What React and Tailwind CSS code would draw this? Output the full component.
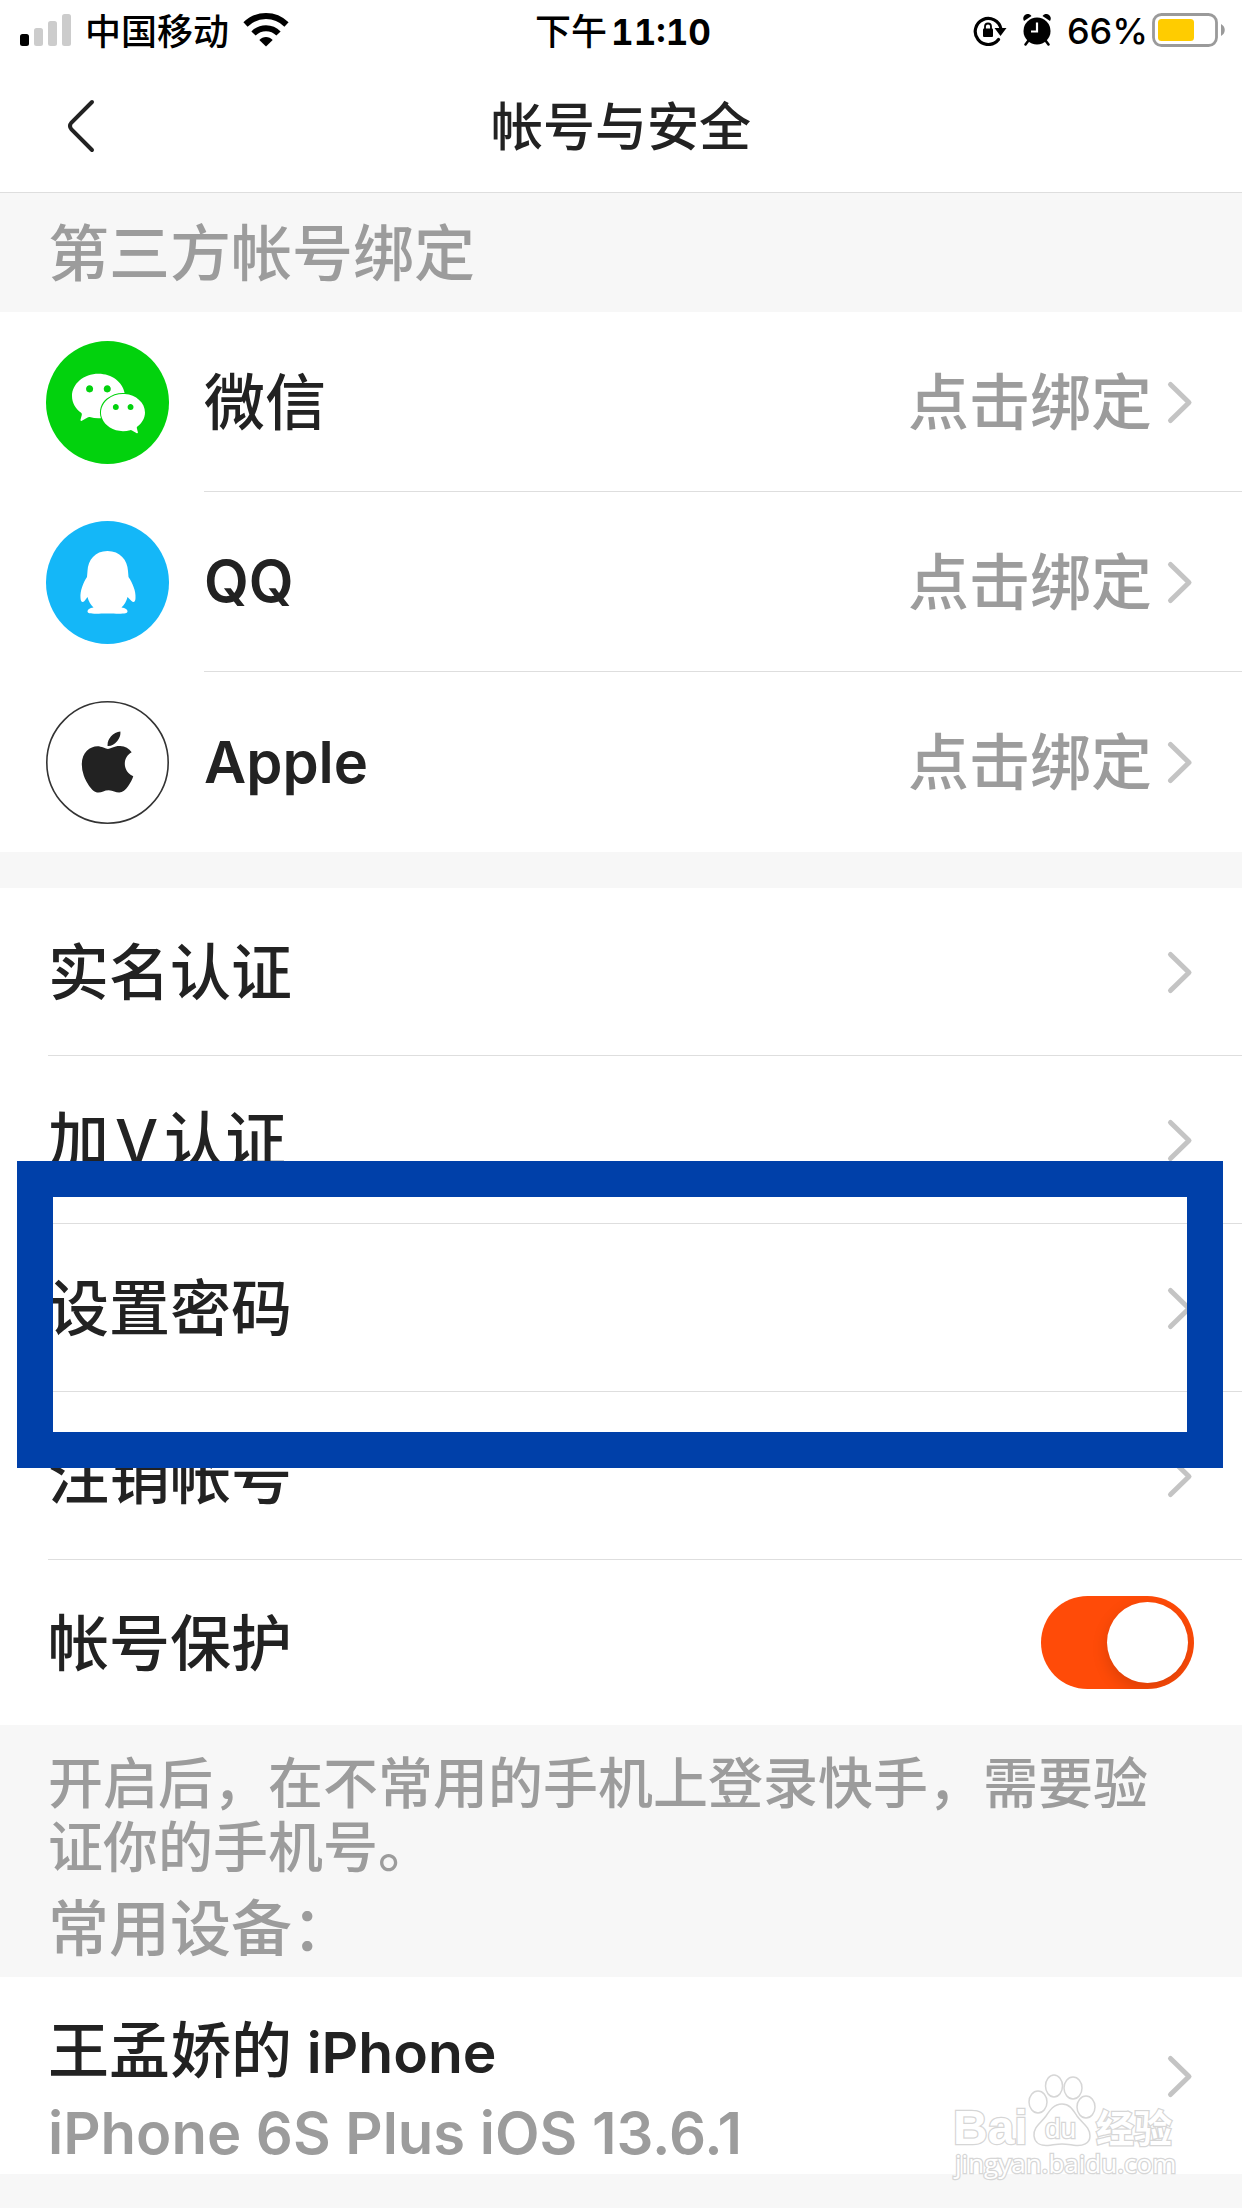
import React, { useState } from 'react';
import { FaApple } from 'react-icons/fa';
import { SiWechat } from 'react-icons/si';

const BIND_DATA = [
    { name: '微信', key: 'wechat', nameClass: 'pt-1 text-[61px] font-medium', icon: WechatIcon },
    { name: 'QQ', key: 'qq', nameClass: 'text-[58px] font-semibold', icon: QQIcon },
    { name: 'Apple', key: 'apple', nameClass: 'text-[58px] font-semibold', icon: AppleIcon },
];

const SETTING_DATA = [
    { name: '实名认证', key: 'realname' },
    { name: <>加<span className="mx-1.5">V</span>认证</>, key: 'verify' },
    { name: '设置密码', key: 'password', marked: true },
    { name: '注销帐号', key: 'cancel' },
];

function WechatIcon() {
    return (
        <svg className="size-[123px] shrink-0" viewBox="0 0 123 123" aria-hidden="true">
            <circle cx="61.5" cy="61.5" r="61.5" fill="#02d20d" />
            <SiWechat x="26" y="26" size={73} color="#fff" />
        </svg>
    );
}

function QQIcon() {
    return (
        <svg className="size-[123px] shrink-0" viewBox="0 0 123 123" aria-hidden="true">
            <circle cx="61.5" cy="61.5" r="61.5" fill="#14b7f8" />
            <path
                fill="#fff"
                d="M61.5 30C49 30 42 39 41.5 50c0 2-.5 4-.5 6C37 62 34 70 34.500 77c.2 4 2 5 4 3l3-4c1 4 3 7.500 6 10.500-4 .5-6 2-6 4 0 2.500 5 2.300 20 2 15 .3 20 .5 20-2 0-2-2-3.500-6-4 3-3 5-6.500 6-10.500l4 4c2 2 4 1 4-3 .5-7-3-15-7-21 0-2-.5-4-.5-6C81.500 39 74 30 61.500 30z"
            />
        </svg>
    );
}

function AppleIcon() {
    return (
        <svg className="size-[123px] shrink-0" viewBox="0 0 123 123" aria-hidden="true">
            <circle cx="61.5" cy="61.5" r="60.7" fill="#fff" stroke="#333" strokeWidth="1.6" />
            <FaApple x="26.500" y="26" size={70} color="#222" />
        </svg>
    );
}

function Chevron() {
    return (
        <svg className="h-12 w-7 shrink-0" viewBox="0 0 28 48" fill="none" aria-hidden="true">
            <path d="M4.500 6.500L23 24.500L4.500 42.500" stroke="#c4c4c4" strokeWidth="5" strokeLinecap="round" strokeLinejoin="round" />
        </svg>
    );
}

function StatusBar() {
    return (
        <div className="grid h-[60px] grid-cols-[1fr_auto_1fr] items-center pr-4 pl-5 text-[36px] leading-none font-medium text-black">
            <div className="flex items-center">
                <svg className="h-8 w-[51px]" viewBox="0 0 51 32" aria-hidden="true">
                    <rect x="0" y="20" width="9" height="12" rx="2.500" fill="#000" />
                    <rect x="14" y="14" width="9" height="18" rx="2.500" fill="#ccc" />
                    <rect x="28" y="7" width="9" height="25" rx="2.500" fill="#ccc" />
                    <rect x="42" y="0" width="9" height="32" rx="2.500" fill="#ccc" />
                </svg>
                <span className="ml-3.5 pt-1">中国移动</span>
                <svg className="ml-3.5 h-[34px] w-[46px]" viewBox="0 0 46 34" fill="none" aria-hidden="true">
                    <path d="M2.500 11.500C14 .2 32 .2 43.500 11.500" stroke="#000" strokeWidth="6" />
                    <path d="M10.500 20.500c7-7 18-7 25 0" stroke="#000" strokeWidth="6" />
                    <path d="M23 33.500l-6.700-6.600c3.700-4 9.700-4 13.400 0z" fill="#000" />
                </svg>
            </div>
            <div className="flex items-center gap-1 pt-1">
                <span>下午</span>
                <span className="text-[35px] font-bold tabular-nums">11:10</span>
            </div>
            <div className="flex items-center justify-end">
                <svg className="h-8 w-[34px]" viewBox="0 0 34 32" fill="none" aria-hidden="true">
                    <path d="M25.500 25.500A13 13 0 1 1 28 15" stroke="#000" strokeWidth="3.200" strokeLinecap="round" />
                    <path d="M21.500 14h12l-6 8z" fill="#000" />
                    <rect x="10" y="14.500" width="10" height="8.500" rx="1" fill="#000" />
                    <path d="M12 15v-2.500a3 3 0 0 1 6 0V15" stroke="#000" strokeWidth="1.800" />
                </svg>
                <svg className="ml-4 h-8 w-7" viewBox="0 0 28 32" aria-hidden="true">
                    <circle cx="14" cy="17" r="13.500" />
                    <path d="M1 7a4.500 4.500 0 0 1 7.500-5zM27 7a4.500 4.500 0 0 0-7.500-5z" />
                    <path d="M5.500 26.500l-3 4M22.500 26.500l3 4" stroke="#000" strokeWidth="2.500" strokeLinecap="round" />
                    <path d="M14 8.500v9H8" fill="none" stroke="#fff" strokeWidth="2.200" />
                </svg>
                <span className="ml-4 pt-0.5">66%</span>
                <svg className="ml-1 h-[34px] w-[74px]" viewBox="0 0 74 34" aria-hidden="true">
                    <rect x="1.500" y="1.500" width="63" height="31" rx="8" fill="none" stroke="#9a9a9a" strokeWidth="2.800" />
                    <rect x="6" y="6" width="36" height="22" rx="3.500" fill="#ffcc00" />
                    <path d="M69 11c5 2.500 5 9.500 0 12z" fill="#9a9a9a" />
                </svg>
            </div>
        </div>
    );
}

function BindRow({ item, last }) {
    const Icon = item.icon;

    return (
        <li>
            <button type="button" className="flex w-full items-center gap-[35px] pl-[46px] text-left">
                <Icon />
                <span className={`flex h-[180px] flex-1 items-center justify-between pr-12 ${last ? '' : 'border-b border-[#dedede]'}`}>
                    <span className={item.nameClass}>{item.name}</span>
                    <span className="flex items-center gap-3.5">
                        <span className="pt-1 text-[61px] font-medium text-[#9c9c9c]">点击绑定</span>
                        <Chevron />
                    </span>
                </span>
            </button>
        </li>
    );
}

function SettingRow({ item }) {
    return (
        <li className="relative pl-12">
            <button type="button" className="flex h-[168px] w-full items-center justify-between border-b border-[#dedede] pr-12 text-left text-[61px] font-medium">
                <span className="pt-1">{item.name}</span>
                <Chevron />
            </button>
            {item.marked && (
                <div className="pointer-events-none absolute -top-[63px] right-[19px] -bottom-[76px] left-[17px] z-10 border-[36px] border-[#0040a9]"></div>
            )}
        </li>
    );
}

function Watermark() {
    return (
        <svg
            className="pointer-events-none absolute right-[60px] -bottom-[10px] h-[115px] w-[232px]"
            viewBox="0 0 232 115"
            fill="#fff"
            stroke="#d6d6d6"
            strokeWidth="1.500"
            aria-hidden="true"
        >
            <ellipse cx="88" cy="33" rx="9" ry="11" />
            <ellipse cx="104" cy="17" rx="8.500" ry="11" />
            <ellipse cx="123" cy="19" rx="9" ry="11" />
            <ellipse cx="136" cy="38" rx="9" ry="11" />
            <path d="M112 35c-8 0-12 6-16 12-5 7-13 11-12 20 1 8 8 10 14 9.500 5-.5 9-1.500 14-1.500s9 1 14 1.500c6 .5 14-1.500 14-9.500 0-9-8-13-13-20-4-6-7-12-15-12z" />
            <g style={{ paintOrder: 'stroke' }} strokeWidth="2.500">
                <text x="3" y="75" className="font-['Liberation_Sans'] text-[48px] font-bold">Bai</text>
                <text x="95" y="69" className="font-['Liberation_Sans'] text-[28px]">du</text>
                <text x="146" y="73" className="font-['Noto_Sans_CJK_SC'] text-[38px] font-bold">经验</text>
                <text x="5" y="104" className="font-['Open_Sans'] text-[26px]">jingyan.baidu.com</text>
            </g>
        </svg>
    );
}

export default function App() {
    const [protect, setProtect] = useState(true);

    return (
        <div className="min-h-screen overflow-x-hidden bg-[#f7f7f7] font-['Inter','Noto_Sans_CJK_SC',sans-serif] text-[#222]">
            <header className="border-b border-[#dedede] bg-white">
                <StatusBar />
                <div className="grid h-[132px] grid-cols-[1fr_auto_1fr] items-center px-[60px]">
                    <button type="button" aria-label="返回" className="w-10">
                        <svg className="h-14 w-10" viewBox="0 0 40 56" fill="none" aria-hidden="true">
                            <path d="M32 4L11.500 24.500q-3 3.500 0 7L32 52" stroke="#222" strokeWidth="4" strokeLinecap="round" />
                        </svg>
                    </button>
                    <h1 className="pt-1 text-[52px] leading-none font-medium">帐号与安全</h1>
                </div>
            </header>

            <main>
                <section>
                    <h2 className="flex h-[119px] items-center px-12 pt-1 text-[61px] font-medium text-[#9c9c9c]">第三方帐号绑定</h2>
                    <ul className="bg-white">
                        {BIND_DATA.map((item, i) => (
                            <BindRow key={item.key} item={item} last={i === BIND_DATA.length - 1} />
                        ))}
                    </ul>
                </section>

                <section className="mt-9 bg-white">
                    <ul>
                        {SETTING_DATA.map(item => (
                            <SettingRow key={item.key} item={item} />
                        ))}
                    </ul>
                    <div className="flex h-[165px] items-center justify-between px-12">
                        <label htmlFor="protect" className="pt-1 text-[61px] font-medium">帐号保护</label>
                        <input
                            id="protect"
                            type="checkbox"
                            checked={protect}
                            onChange={(e) => setProtect(e.target.checked)}
                            className="flex h-[93px] w-[153px] appearance-none items-center overflow-hidden rounded-full bg-[#e5e5e5] p-1.5 before:size-[81px] before:rounded-full before:bg-white before:shadow-[0_6px_16px_rgba(0,0,0,0.15)] checked:justify-end checked:bg-[#ff4b08]"
                        />
                    </div>
                </section>

                <div className="px-12 pt-[26px] pb-3 text-[#9c9c9c]">
                    <p className="text-[55px] leading-[64px] font-medium">开启后，在不常用的手机上登录快手，需要验证你的手机号。</p>
                    <h2 className="mt-3.5 text-[61px] leading-[72px] font-medium">常用设备：</h2>
                </div>

                <section className="relative bg-white">
                    <button type="button" className="flex w-full items-center justify-between px-12 text-left">
                        <span className="flex flex-col pt-[34px] text-[58px] leading-[81px] font-semibold">
                            <span><span className="text-[61px] font-medium">王孟娇的</span> <span className="text-[57px]">iPhone</span></span>
                            <span className="text-[#9c9c9c]">iPhone 6S Plus iOS 13.6.1</span>
                        </span>
                        <Chevron />
                    </button>
                    <Watermark />
                </section>
            </main>
        </div>
    );
}
